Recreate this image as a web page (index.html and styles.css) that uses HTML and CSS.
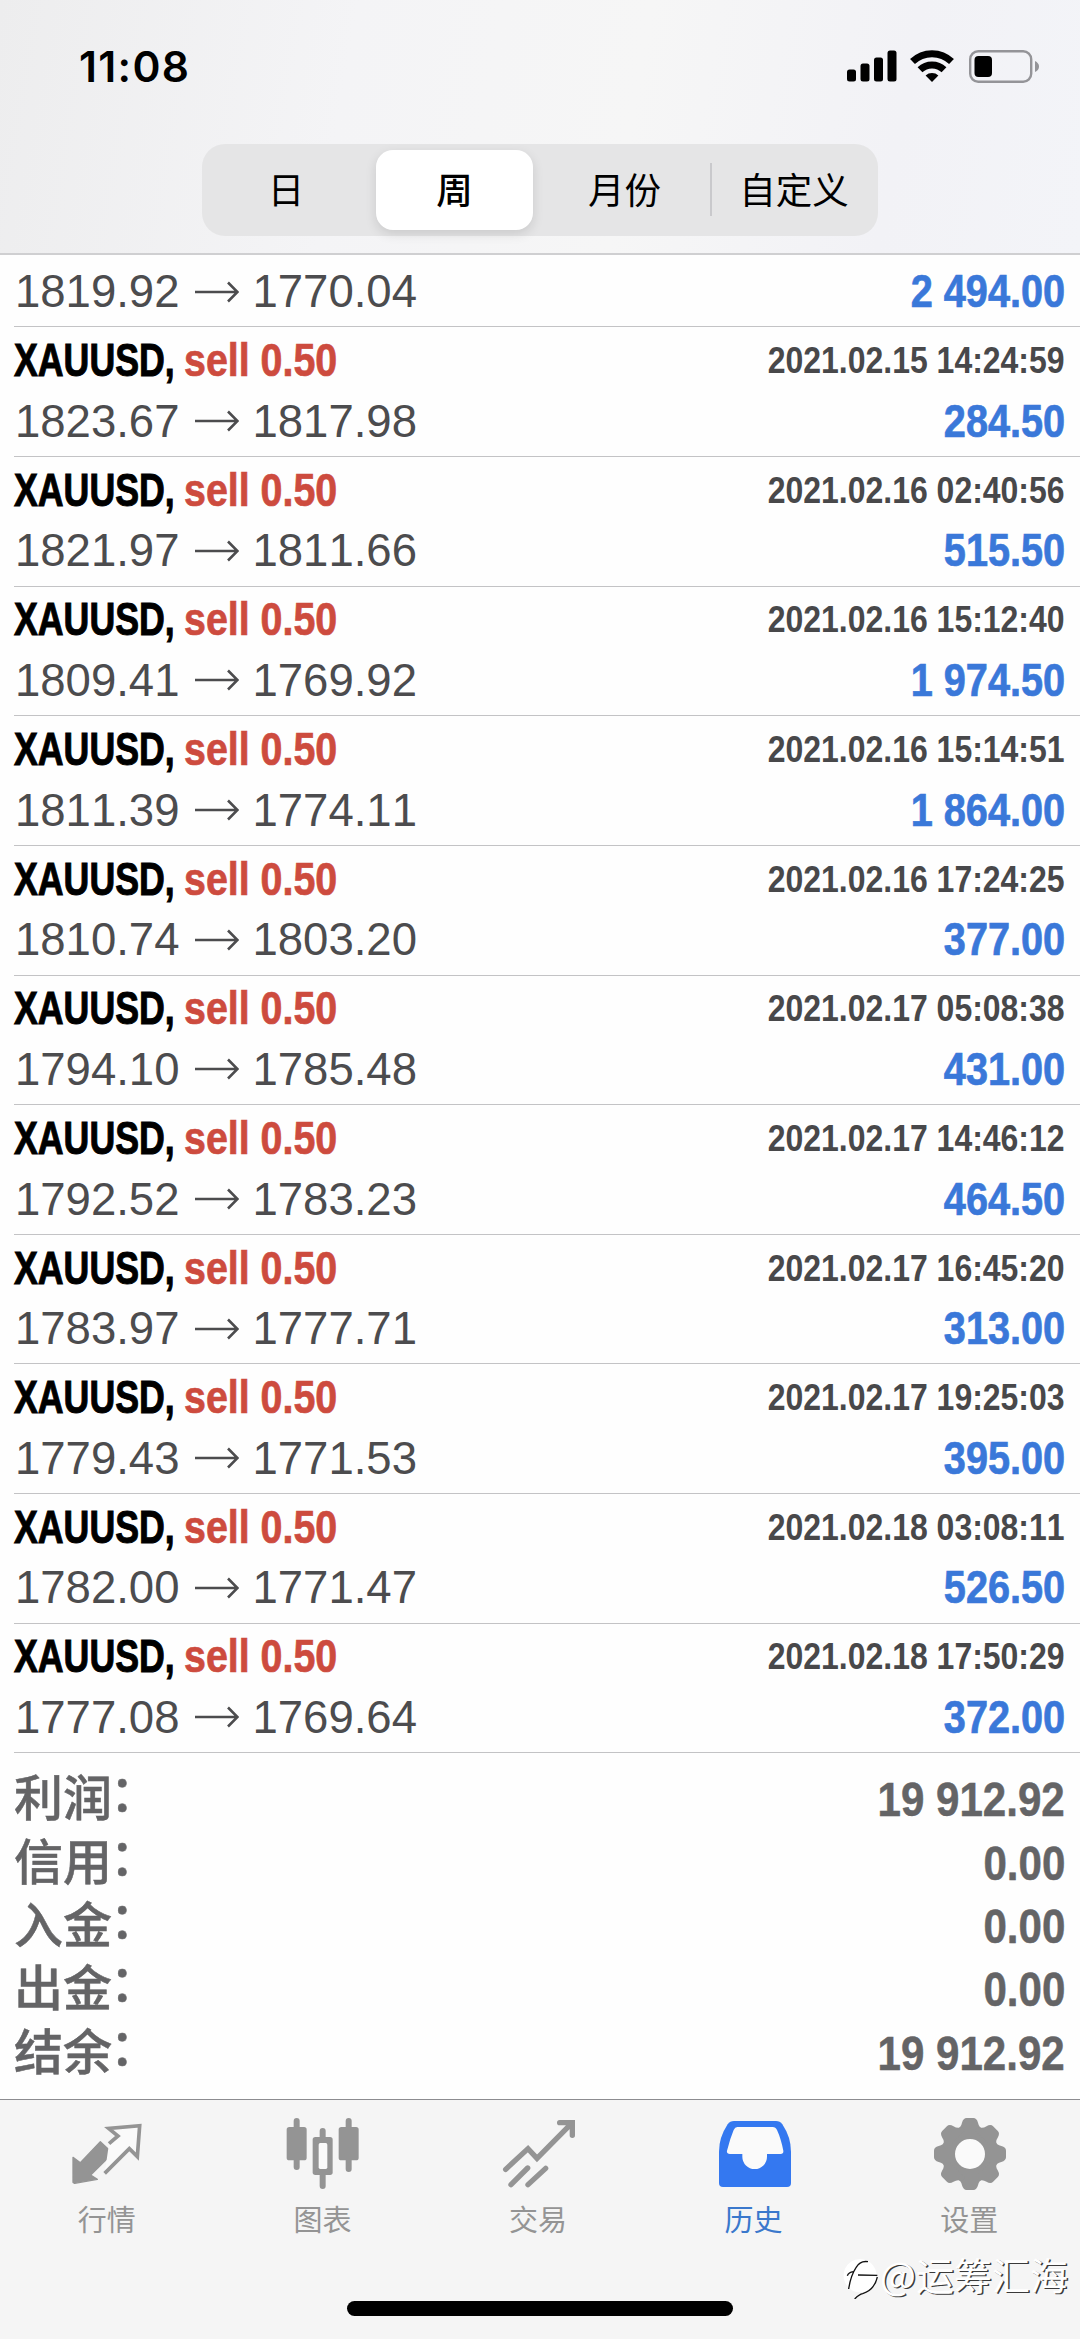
FILE: index.html
```html
<!DOCTYPE html>
<html lang="zh-CN">
<head>
<meta charset="utf-8">
<title>历史</title>
<link rel="stylesheet" href="styles.css">
</head>
<body>
<svg class="defs" width="0" height="0">
  <symbol id="arrow" viewBox="0 0 44 22"><path d="M0 11H42M33 1.5L42.5 11L33 20.500" fill="none" stroke="currentColor" stroke-width="2.600"/></symbol>
</svg>
<div class="screen">
  <header class="header">
    <div class="status">
      <span class="clock">11:08</span>
      <div class="status-icons">
        <svg class="signal" width="50" height="32" viewBox="0 0 50 32"><rect x="0" y="19.500" width="9" height="12" rx="2.500"/><rect x="13.500" y="13.500" width="9" height="18" rx="2.500"/><rect x="27" y="7.500" width="9" height="24" rx="2.500"/><rect x="40.500" y="0.500" width="9" height="31" rx="2.500"/></svg>
        <svg class="wifi" width="44" height="32" viewBox="0 0 44 32"><g fill="none" stroke="#000" stroke-width="7"><path d="M2.500 11.600A28 28 0 0 1 41.500 11.600"/><path d="M10 19.800A17.500 17.500 0 0 1 34 19.800"/></g><path d="M22 32L15.600 25.500A9.500 9.500 0 0 1 28.400 25.500Z"/></svg>
        <svg class="battery" width="70" height="33" viewBox="0 0 70 33"><rect x="1.200" y="1.200" width="61" height="30.600" rx="8" fill="none" stroke="#949498" stroke-width="2.400"/><rect x="5.500" y="6" width="17.500" height="21" rx="4"/><path d="M66 11Q70 13 70 16.500T66 22Z" fill="#949498"/></svg>
      </div>
    </div>
    <nav class="segments">
      <span class="segment">日</span>
      <span class="segment active">周</span>
      <span class="segment">月份</span>
      <span class="segment divided">自定义</span>
    </nav>
  </header>

  <main class="history">
    <div class="deal partial">
      <div class="line"><span class="prices">1819.92<svg class="arrow"><use href="#arrow"/></svg>1770.04</span><b class="profit">2 494.00</b></div>
    </div>
    <div class="deal">
      <div class="line"><b class="symbol">XAUUSD,</b><b class="side">sell 0.50</b><b class="date">2021.02.15 14:24:59</b></div>
      <div class="line"><span class="prices">1823.67<svg class="arrow"><use href="#arrow"/></svg>1817.98</span><b class="profit">284.50</b></div>
    </div>
    <div class="deal">
      <div class="line"><b class="symbol">XAUUSD,</b><b class="side">sell 0.50</b><b class="date">2021.02.16 02:40:56</b></div>
      <div class="line"><span class="prices">1821.97<svg class="arrow"><use href="#arrow"/></svg>1811.66</span><b class="profit">515.50</b></div>
    </div>
    <div class="deal">
      <div class="line"><b class="symbol">XAUUSD,</b><b class="side">sell 0.50</b><b class="date">2021.02.16 15:12:40</b></div>
      <div class="line"><span class="prices">1809.41<svg class="arrow"><use href="#arrow"/></svg>1769.92</span><b class="profit">1 974.50</b></div>
    </div>
    <div class="deal">
      <div class="line"><b class="symbol">XAUUSD,</b><b class="side">sell 0.50</b><b class="date">2021.02.16 15:14:51</b></div>
      <div class="line"><span class="prices">1811.39<svg class="arrow"><use href="#arrow"/></svg>1774.11</span><b class="profit">1 864.00</b></div>
    </div>
    <div class="deal">
      <div class="line"><b class="symbol">XAUUSD,</b><b class="side">sell 0.50</b><b class="date">2021.02.16 17:24:25</b></div>
      <div class="line"><span class="prices">1810.74<svg class="arrow"><use href="#arrow"/></svg>1803.20</span><b class="profit">377.00</b></div>
    </div>
    <div class="deal">
      <div class="line"><b class="symbol">XAUUSD,</b><b class="side">sell 0.50</b><b class="date">2021.02.17 05:08:38</b></div>
      <div class="line"><span class="prices">1794.10<svg class="arrow"><use href="#arrow"/></svg>1785.48</span><b class="profit">431.00</b></div>
    </div>
    <div class="deal">
      <div class="line"><b class="symbol">XAUUSD,</b><b class="side">sell 0.50</b><b class="date">2021.02.17 14:46:12</b></div>
      <div class="line"><span class="prices">1792.52<svg class="arrow"><use href="#arrow"/></svg>1783.23</span><b class="profit">464.50</b></div>
    </div>
    <div class="deal">
      <div class="line"><b class="symbol">XAUUSD,</b><b class="side">sell 0.50</b><b class="date">2021.02.17 16:45:20</b></div>
      <div class="line"><span class="prices">1783.97<svg class="arrow"><use href="#arrow"/></svg>1777.71</span><b class="profit">313.00</b></div>
    </div>
    <div class="deal">
      <div class="line"><b class="symbol">XAUUSD,</b><b class="side">sell 0.50</b><b class="date">2021.02.17 19:25:03</b></div>
      <div class="line"><span class="prices">1779.43<svg class="arrow"><use href="#arrow"/></svg>1771.53</span><b class="profit">395.00</b></div>
    </div>
    <div class="deal">
      <div class="line"><b class="symbol">XAUUSD,</b><b class="side">sell 0.50</b><b class="date">2021.02.18 03:08:11</b></div>
      <div class="line"><span class="prices">1782.00<svg class="arrow"><use href="#arrow"/></svg>1771.47</span><b class="profit">526.50</b></div>
    </div>
    <div class="deal">
      <div class="line"><b class="symbol">XAUUSD,</b><b class="side">sell 0.50</b><b class="date">2021.02.18 17:50:29</b></div>
      <div class="line"><span class="prices">1777.08<svg class="arrow"><use href="#arrow"/></svg>1769.64</span><b class="profit">372.00</b></div>
    </div>
  </main>

  <section class="summary">
    <div class="total"><span>利润<i class="colon">：</i></span><b>19 912.92</b></div>
    <div class="total"><span>信用<i class="colon">：</i></span><b>0.00</b></div>
    <div class="total"><span>入金<i class="colon">：</i></span><b>0.00</b></div>
    <div class="total"><span>出金<i class="colon">：</i></span><b>0.00</b></div>
    <div class="total"><span>结余<i class="colon">：</i></span><b>19 912.92</b></div>
  </section>

  <footer class="footer">
    <nav class="tabs">
      <div class="tab">
        <svg viewBox="215 114 216 216"><path fill="currentColor" stroke="currentColor" stroke-width="4" stroke-linejoin="round" d="M218 232L240 248L300 185L337 220L271 285L291 298L223 310L218 307Z"/><path fill="#fafafa" stroke="currentColor" stroke-width="11" d="M326 191L353 168L325 145L418 137L411 230L387 206L313 280"/></svg>
        <span>行情</span>
      </div>
      <div class="tab">
        <svg viewBox="862 114 216 216"><g fill="currentColor"><rect x="861" y="141" width="60" height="100" rx="8"/><rect x="882" y="114" width="18" height="156" rx="9"/><rect x="1017" y="141" width="60" height="100" rx="8"/><rect x="1038" y="114" width="18" height="162" rx="9"/><rect x="960" y="144" width="18" height="183" rx="9"/><rect x="939" y="171" width="60" height="114" rx="8"/></g><rect x="957" y="189" width="26" height="78" rx="5" fill="#fafafa"/></svg>
        <span>图表</span>
      </div>
      <div class="tab">
        <svg viewBox="309 114 216 216"><g fill="none" stroke="currentColor" stroke-width="16" stroke-linecap="round"><path d="M317 268L384 206L411 235L514 131M479 128H517V166"/><path d="M333 314L383 264M384 314L437 265"/></g></svg>
        <span>交易</span>
      </div>
      <div class="tab current">
        <svg viewBox="957 114 216 216"><path fill="currentColor" d="M1002 123H1128Q1140 123 1147 133Q1173 172 1173 215V309Q1173 321 1161 321H969Q957 321 957 309V215Q957 172 983 133Q990 123 1002 123Z"/><path fill="#fafafa" d="M1012 141H1118Q1127 141 1131 150Q1143 176 1150 212Q1151 222 1142 222H1101V230A37 37 0 0 1 1027 230V222H990Q979 222 981 212Q990 176 1001 150Q1005 141 1012 141Z"/></svg>
        <span>历史</span>
      </div>
      <div class="tab">
        <svg viewBox="-108 -108 216 216"><defs><path id="tooth" d="M-39 -76Q-27 -79 -24 -94Q-20 -108 -10 -108H10Q20 -108 24 -94Q27 -79 39 -76V-60H-39Z"/></defs><circle r="46" fill="#fafafa"/><circle r="63" fill="none" stroke="currentColor" stroke-width="36"/><g fill="currentColor"><use href="#tooth"/><use href="#tooth" transform="rotate(45)"/><use href="#tooth" transform="rotate(90)"/><use href="#tooth" transform="rotate(135)"/><use href="#tooth" transform="rotate(180)"/><use href="#tooth" transform="rotate(225)"/><use href="#tooth" transform="rotate(270)"/><use href="#tooth" transform="rotate(315)"/></g></svg>
        <span>设置</span>
      </div>
    </nav>
    <div class="home-bar"></div>
  </footer>

  <div class="watermark">
    <svg width="36" height="44" viewBox="0 0 108 132"><path fill="#fff" d="M54 12A50 50 0 1 1 30 106L18 96A50 50 0 0 1 54 12Z"/><path fill="none" stroke="#111" stroke-width="4" d="M20 102Q26 62 42 38Q54 16 78 20M16 62Q20 52 34 50M48 60L106 61M106 66Q98 104 62 116Q52 118 38 132"/></svg>
    <span>@运筹汇海</span>
  </div>
</div>
</body>
</html>
```
FILE: styles.css
```css
* { box-sizing: border-box; }

body {
  margin: 0;
  background: #fff;
  font-family: "Liberation Sans", "Noto Sans CJK SC", sans-serif;
  font-kerning: none;
}

.defs { display: block; position: absolute; }

.screen {
  position: relative;
  display: flex;
  flex-direction: column;
  width: 1080px;
  height: 2339px;
  overflow: hidden;
  background: #fefefe;
}

/* Header */
.header {
  flex: none;
  display: flex;
  flex-direction: column;
  align-items: center;
  height: 255px;
  border-bottom: 2px solid #cfcfd1;
  background: linear-gradient(100deg, #ededee 0%, #f4f4f6 32%, #f6f6f6 58%, #f2f2f6 82%, #f3f4f8 100%);
}

.status {
  display: flex;
  justify-content: space-between;
  align-items: flex-start;
  width: 100%;
  height: 144px;
  padding: 50px 41px 0 79px;
}

.clock {
  font: 600 42.500px/33px Inter, sans-serif;
  letter-spacing: 1.3px;
}

.status-icons { display: flex; }
.wifi { margin-left: 13px; }
.battery { margin-left: 15px; }

.segments {
  display: grid;
  grid-template-columns: 168px 169px 171px 168px;
  width: 676px;
  height: 92px;
  padding: 6px 0;
  border-radius: 23px;
  background: #e5e5e6;
  font: 400 36.500px/77px "Noto Sans CJK SC", sans-serif;
  color: #000;
}

.segment { text-align: center; }

.segment.active {
  margin: 0 6px;
  border-radius: 17px;
  background: #fff;
  box-shadow: 0 4px 12px rgba(0, 0, 0, 0.12);
  font-weight: 500;
}

.segment.divided {
  background: linear-gradient(#c9c9cc, #c9c9cc) 0 13px / 2px 53px no-repeat;
}

/* Deals */
.history {
  flex: none;
  display: grid;
  grid-template-rows: 72.400px repeat(11, 129.640px);
  padding-left: 14px;
}

.deal {
  display: flex;
  flex-direction: column;
  justify-content: flex-end;
  padding: 0 15px 3.500px 0;
  border-bottom: 1px solid #c3c3c5;
}

.line {
  display: flex;
  height: 60.700px;
  font-size: 45.500px;
  line-height: 60.700px;
  white-space: nowrap;
}

.symbol {
  width: 170px;
  transform: scaleX(0.785);
  transform-origin: left;
  color: #000;
  -webkit-text-stroke: 1px;
}

.side {
  transform: scaleX(0.865);
  transform-origin: left;
  color: #cd4b3e;
  -webkit-text-stroke: 0.7px;
}

.date {
  margin-left: auto;
  font-size: 37px;
  transform: scaleX(0.864);
  transform-origin: right;
  color: #48484a;
}

.prices {
  display: flex;
  align-items: center;
  padding-left: 1px;
  color: #4c4c4e;
}

.arrow {
  width: 44px;
  height: 22px;
  margin: -2px 13.500px 0 15.500px;
}

.profit {
  margin-left: auto;
  transform: scaleX(0.872);
  transform-origin: right;
  color: #3a78d9;
  -webkit-text-stroke: 0.7px;
}

/* Totals */
.summary {
  flex: none;
  height: 346px;
  padding: 15px 15px 0 14px;
  color: #646466;
}

.total {
  display: flex;
  justify-content: space-between;
  height: 63.400px;
  font: 500 49px/63.400px "Liberation Sans", "Noto Sans CJK SC", sans-serif;
  -webkit-text-stroke: 0.5px;
}

.colon {
  position: relative;
  top: -5px;
  left: -2px;
  font-style: normal;
}

.total b {
  font: 700 48.500px/63.400px "Liberation Sans", sans-serif;
  transform: scaleX(0.868);
  transform-origin: right;
}

/* Tab bar */
.footer {
  flex: 1;
  display: flex;
  flex-direction: column;
  align-items: center;
  border-top: 1px solid #8c8c90;
  background: #f5f5f5;
}

.tabs {
  display: grid;
  grid-template-columns: repeat(5, 1fr);
  width: 100%;
  height: 201px;
  padding: 18px 2px 0 0;
}

.tab {
  display: flex;
  flex-direction: column;
  align-items: center;
  gap: 8px;
  color: #949494;
  font: 400 29px/40px "Noto Sans CJK SC", sans-serif;
}

.tab span { margin-left: -2px; }
.tab svg { width: 72px; height: 72px; overflow: visible; }
.tab.current { color: #3478f0; }
.tab.current span { color: #3a78cc; }

.home-bar {
  width: 386px;
  height: 15px;
  border-radius: 8px;
  background: #000;
}

.watermark {
  position: absolute;
  left: 842px;
  top: 2255px;
  display: flex;
  gap: 2px;
  color: #fff;
  font: 400 38px/38px "Noto Sans CJK SC", sans-serif;
  text-shadow: 1.500px 1px 0 #3a3a3a;
}
```
